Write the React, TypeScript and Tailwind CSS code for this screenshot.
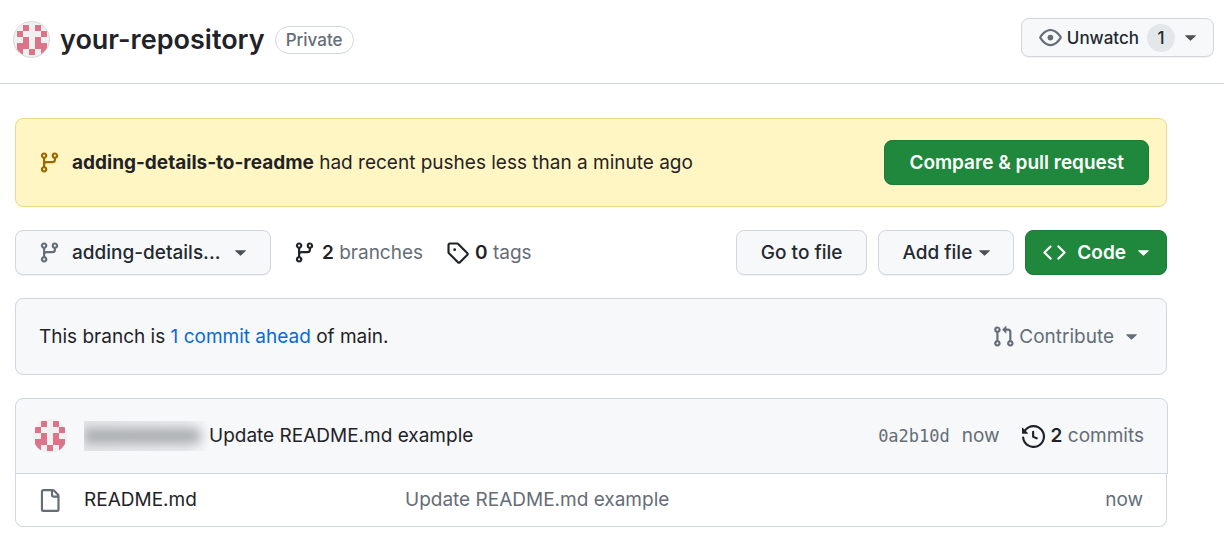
import type { ReactNode } from "react";

const icons = {
  branch:
    "M9.5 3.25a2.25 2.25 0 1 1 3 2.122V6A2.5 2.5 0 0 1 10 8.5H6a1 1 0 0 0-1 1v1.128a2.251 2.251 0 1 1-1.5 0V5.372a2.25 2.25 0 1 1 1.5 0v1.836A2.493 2.493 0 0 1 6 7h4a1 1 0 0 0 1-1v-.628A2.25 2.25 0 0 1 9.5 3.25Zm-6 0a.75.75 0 1 0 1.5 0 .75.75 0 0 0-1.5 0Zm8.25-.75a.75.75 0 1 0 0 1.5.75.75 0 0 0 0-1.5ZM4.25 12a.75.75 0 1 0 0 1.5.75.75 0 0 0 0-1.5Z",
  eye: "M8 2c1.981 0 3.671.992 4.933 2.078 1.27 1.091 2.187 2.345 2.637 3.023a1.62 1.62 0 0 1 0 1.798c-.45.678-1.367 1.932-2.637 3.023C11.67 13.008 9.981 14 8 14c-1.981 0-3.671-.992-4.933-2.078C1.797 10.83.88 9.576.43 8.898a1.62 1.62 0 0 1 0-1.798c.45-.677 1.367-1.931 2.637-3.022C4.33 2.992 6.019 2 8 2ZM1.679 7.932a.12.12 0 0 0 0 .136c.411.622 1.241 1.75 2.366 2.717C5.176 11.758 6.527 12.5 8 12.5c1.473 0 2.825-.742 3.955-1.715 1.124-.967 1.954-2.096 2.366-2.717a.12.12 0 0 0 0-.136c-.412-.621-1.242-1.75-2.366-2.717C10.824 4.242 9.473 3.5 8 3.5c-1.473 0-2.825.742-3.955 1.715-1.124.967-1.954 2.096-2.366 2.717ZM8 10a2 2 0 1 1-.001-3.999A2 2 0 0 1 8 10Z",
  tag: "M1 7.775V2.75C1 1.784 1.784 1 2.75 1h5.025c.464 0 .91.184 1.238.513l6.25 6.25a1.75 1.75 0 0 1 0 2.474l-5.026 5.026a1.75 1.75 0 0 1-2.474 0l-6.25-6.25A1.752 1.752 0 0 1 1 7.775Zm1.5 0c0 .066.026.13.073.177l6.25 6.25a.25.25 0 0 0 .354 0l5.025-5.025a.25.25 0 0 0 0-.354l-6.25-6.25a.25.25 0 0 0-.177-.073H2.75a.25.25 0 0 0-.25.25ZM6 5a1 1 0 1 1 0 2 1 1 0 0 1 0-2Z",
  code: "m11.28 3.22 4.25 4.25a.75.75 0 0 1 0 1.06l-4.25 4.25a.749.749 0 0 1-1.275-.326.749.749 0 0 1 .215-.734L13.94 8l-3.72-3.72a.749.749 0 0 1 .326-1.275.749.749 0 0 1 .734.215Zm-6.56 0a.751.751 0 0 1 1.042.018.751.751 0 0 1 .018 1.042L2.06 8l3.72 3.72a.749.749 0 0 1-.326 1.275.749.749 0 0 1-.734-.215L.47 8.53a.75.75 0 0 1 0-1.06Z",
  pull: "M1.5 3.25a2.25 2.25 0 1 1 3 2.122v5.256a2.251 2.251 0 1 1-1.5 0V5.372A2.25 2.25 0 0 1 1.5 3.25Zm5.677-.177L9.573.677A.25.25 0 0 1 10 .854V2.5h1A2.5 2.5 0 0 1 13.5 5v5.628a2.251 2.251 0 1 1-1.5 0V5a1 1 0 0 0-1-1h-1v1.646a.25.25 0 0 1-.427.177L7.177 3.427a.25.25 0 0 1 0-.354ZM3.75 2.5a.75.75 0 1 0 0 1.5.75.75 0 0 0 0-1.5Zm0 9.5a.75.75 0 1 0 0 1.5.75.75 0 0 0 0-1.5Zm8.25.75a.75.75 0 1 0 1.5 0 .75.75 0 0 0-1.5 0Z",
  history:
    "m.427 1.927 1.215 1.215a8.002 8.002 0 1 1-1.6 5.685.75.75 0 1 1 1.493-.154 6.5 6.5 0 1 0 1.18-4.458l1.358 1.358A.25.25 0 0 1 3.896 6H.25A.25.25 0 0 1 0 5.75V2.104a.25.25 0 0 1 .427-.177ZM7.75 4a.75.75 0 0 1 .75.75v2.992l2.028.812a.75.75 0 0 1-.557 1.392l-2.5-1A.751.751 0 0 1 7 8.25v-3.5A.75.75 0 0 1 7.75 4Z",
  file: "M2 1.75C2 .784 2.784 0 3.75 0h6.586c.464 0 .909.184 1.237.513l2.914 2.914c.329.328.513.773.513 1.237v9.586A1.75 1.75 0 0 1 13.25 16h-9.5A1.75 1.75 0 0 1 2 14.25Zm1.75-.25a.25.25 0 0 0-.25.25v12.5c0 .138.112.25.25.25h9.5a.25.25 0 0 0 .25-.25V6h-2.75A1.75 1.75 0 0 1 9 4.25V1.5Zm6.75.062V4.25c0 .138.112.25.25.25h2.688l-.011-.013-2.914-2.914-.013-.011Z",
};

function Icon({ name, className = "" }: { name: keyof typeof icons; className?: string }) {
  return (
    <svg viewBox="0 0 16 16" fill="currentColor" aria-hidden="true" className={`size-[23px] shrink-0 ${className}`}>
      <path d={icons[name]} />
    </svg>
  );
}

function Caret({ className = "" }: { className?: string }) {
  return (
    <svg viewBox="0 0 12 6" fill="currentColor" aria-hidden="true" className={`h-[6px] w-[11px] shrink-0 ${className}`}>
      <path d="M0.6 0h10.8a.4.4 0 0 1 .3.7L6.4 5.8a.6.6 0 0 1-.8 0L.3.7A.4.4 0 0 1 .6 0Z" />
    </svg>
  );
}

const cells = [
  [1, 0], [3, 0],
  [0, 1], [4, 1],
  [1, 2], [3, 2],
  [0, 3], [1, 3], [3, 3], [4, 3],
  [0, 4], [2, 4], [4, 4],
];

function Identicon({ className = "" }: { className?: string }) {
  return (
    <svg viewBox="0 0 70 70" shapeRendering="crispEdges" aria-hidden="true" className={`shrink-0 rounded-full bg-[#f0f0f0] ${className}`}>
      {cells.map(([x, y]) => (
        <rect key={`${x}-${y}`} x={5 + x * 12} y={5 + y * 12} width="12" height="12" fill="#db7488" />
      ))}
    </svg>
  );
}

function GreyButton({ children, className = "" }: { children: ReactNode; className?: string }) {
  return (
    <button
      type="button"
      className={`flex items-center rounded-lg border border-[#d3d7db] bg-[#f6f8fa] font-medium text-[#24292f] shadow-[0_1px_0_rgba(31,35,40,0.06)] ${className}`}
    >
      {children}
    </button>
  );
}

export default function App() {
  return (
    <div className="min-h-screen bg-white font-['Inter','Liberation_Sans',sans-serif] text-[19px] leading-7 text-[#1f2328]">
      <header className="mr-0.5 flex h-[84px] items-start justify-between border-b border-[#d0d7de] pr-[10px] pl-[13px]">
        <div className="flex h-[79px] items-center">
          <Identicon className="size-[37px] border border-[#d8dadc]" />
          <h1 className="ml-[10px] text-[27px] font-semibold">your-repository</h1>
          <span className="ml-[10px] rounded-full border border-[#d0d7de] px-[10px] text-[17px] leading-[26px] font-medium text-[#656d76]">
            Private
          </span>
        </div>
        <GreyButton className="mt-[18px] h-[39px] px-[17px] text-[17px]">
          <Icon name="eye" className="text-[#656d76]" />
          <span className="ml-[5px]">Unwatch</span>
          <span className="ml-2 flex size-7 items-center justify-center rounded-full bg-[#e4e7e9]">1</span>
          <Caret className="ml-[10px] text-[#4b5156]" />
        </GreyButton>
      </header>

      <main className="mt-[34px] mr-[59px] ml-[15px] flex flex-col gap-[23px]">
        <section className="flex h-[89px] items-center justify-between rounded-lg border border-[#eed888] bg-[#fff6c4] pr-[17px] pl-[22px]">
          <p className="flex items-center">
            <Icon name="branch" className="mr-[11px] text-[#9a6700]" />
            <span>
              <strong className="font-bold">adding-details-to-readme</strong> had recent pushes less than a minute ago
            </span>
          </p>
          <button
            type="button"
            className="h-[45px] rounded-lg border border-[#1c7b37] bg-[#1f883d] px-6 font-semibold text-white"
          >
            Compare &amp; pull request
          </button>
        </section>

        <div className="flex h-[45px] items-stretch">
          <GreyButton className="w-[256px] pl-[22px]">
            <Icon name="branch" className="mr-[11px] text-[#656d76]" />
            adding-details...
            <Caret className="ml-[15px] text-[#4b5156]" />
          </GreyButton>
          <nav className="ml-[22px] flex grow items-center gap-[23px] text-[#656d76]">
            <a href="#branches" className="flex items-center">
              <Icon name="branch" className="mr-[6px] text-[#1f2328]" />
              <span>
                <strong className="font-semibold text-[#1f2328]">2</strong> branches
              </span>
            </a>
            <a href="#tags" className="flex items-center">
              <Icon name="tag" className="mr-[6px] text-[#1f2328]" />
              <span>
                <strong className="font-semibold text-[#1f2328]">0</strong> tags
              </span>
            </a>
          </nav>
          <div className="flex items-stretch gap-[11px]">
            <GreyButton className="px-6">Go to file</GreyButton>
            <GreyButton className="px-[23px]">
              Add file
              <Caret className="ml-[7px] text-[#4b5156]" />
            </GreyButton>
            <button
              type="button"
              className="flex items-center rounded-lg border border-[#1c7b37] bg-[#1f883d] px-[17px] font-semibold text-white"
            >
              <Icon name="code" className="mr-[11px]" />
              Code
              <Caret className="ml-3" />
            </button>
          </div>
        </div>

        <section className="flex h-[77px] items-center justify-between rounded-lg border border-[#d0d7de] bg-[#f6f8fa] pr-[29px] pl-[23px]">
          <p>
            This branch is{" "}
            <a href="#compare" className="text-[#0969da]">
              1 commit ahead
            </a>{" "}
            of main.
          </p>
          <button type="button" className="flex items-center text-[#656d76]">
            <Icon name="pull" className="mr-[4px]" />
            Contribute
            <Caret className="ml-3" />
          </button>
        </section>

        <section>
          <div className="-mr-px flex h-[76px] items-center justify-between rounded-t-lg border border-[#d0d7de] bg-[#f6f8fa] pr-[23px] pl-[17px]">
            <div className="flex items-center">
              <Identicon className="size-[34px]" />
              <div className="ml-[17px] flex h-[30px] w-[125px] items-center overflow-hidden bg-linear-to-r from-[#e6e8ea] via-[#eceef0] via-80% to-[#f6f8fa]">
                <div className="h-[14px] w-[116px] bg-[#a3a7aa] blur-[6px]" />
              </div>
              <a href="#commit">Update README.md example</a>
            </div>
            <div className="flex items-center text-[#656d76]">
              <a href="#commit" className="font-['DejaVu_Sans_Mono',monospace] text-[17px]">
                0a2b10d
              </a>
              <span className="ml-3">now</span>
              <a href="#commits" className="ml-[22px] flex items-center">
                <Icon name="history" className="mr-[6px] text-[#1f2328]" />
                <span>
                  <strong className="font-semibold text-[#1f2328]">2</strong> commits
                </span>
              </a>
            </div>
          </div>
          <div className="rounded-b-lg border border-t-0 border-[#d0d7de]">
            <table className="w-full table-fixed" aria-label="Files">
              <tbody>
                <tr className="h-[52px]">
                  <td className="w-[389px] p-0 pl-[22px]">
                    <a href="#readme" className="flex items-center">
                      <Icon name="file" className="mr-[23px] text-[#656d76]" />
                      README.md
                    </a>
                  </td>
                  <td className="p-0 text-[#656d76]">Update README.md example</td>
                  <td className="w-[120px] p-0 pr-[23px] text-right text-[#656d76]">now</td>
                </tr>
              </tbody>
            </table>
          </div>
        </section>
      </main>
    </div>
  );
}
